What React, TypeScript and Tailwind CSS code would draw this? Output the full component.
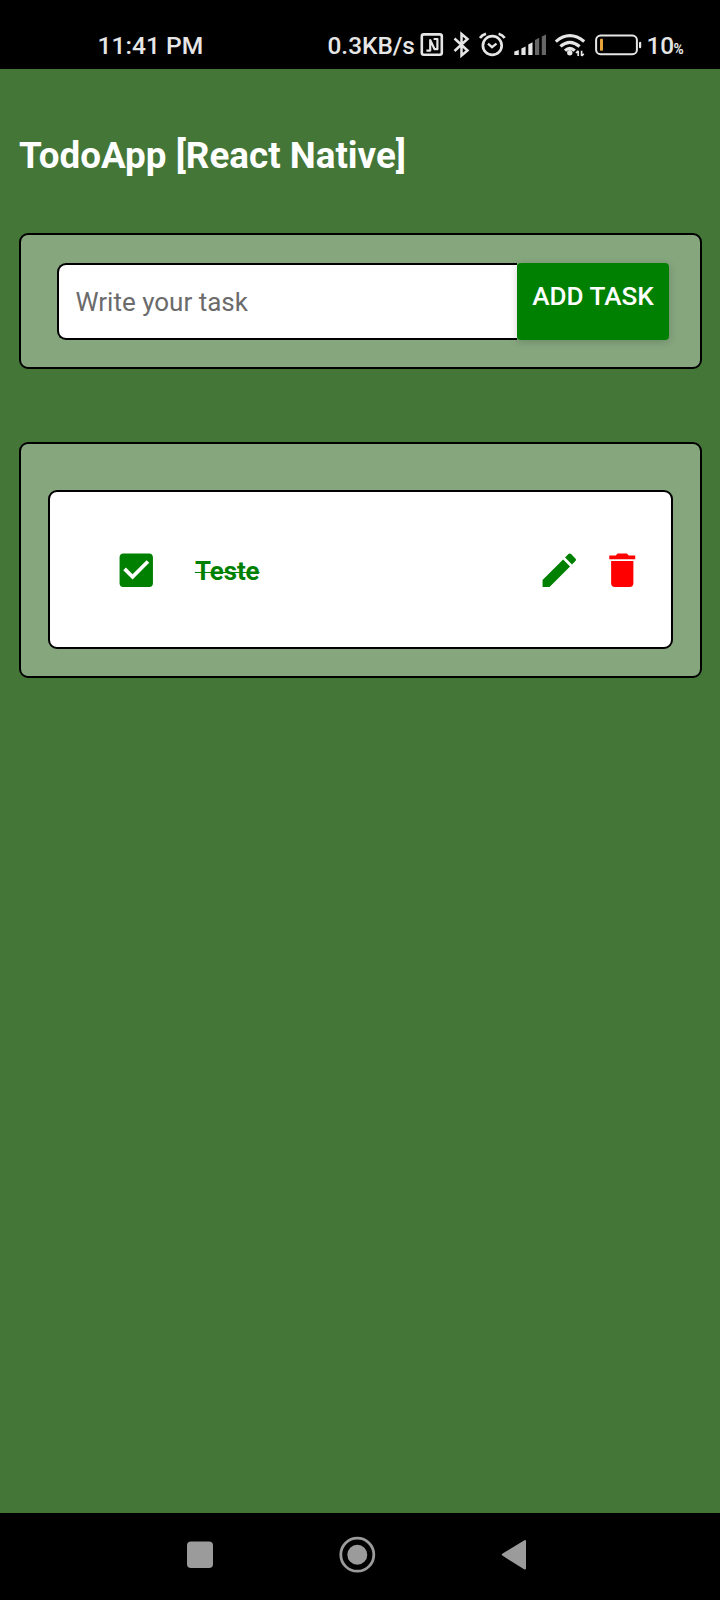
function StatusBar() {
  return (
    <header className="flex h-[69px] shrink-0 items-start bg-black text-[#e6e6e6]">
      <span className="ml-[97.5px] mt-[32px] w-[230px] whitespace-nowrap text-[24.6px] font-medium leading-[28px]">
        11:41 PM
      </span>
      <span className="mt-[32px] w-[92.5px] whitespace-nowrap text-[24.4px] font-medium leading-[28px]">
        0.3KB/s
      </span>
      <svg className="mt-[20px] h-[48px] w-[228px] shrink-0" viewBox="420 20 228 48" fill="none" stroke="#e6e6e6">
        <rect x="421.8" y="34.4" width="20" height="20.4" rx="2" strokeWidth="2.6" />
        <path d="M426.4 50.6H430.2V40L434.6 49.2H437.4V39H433.6" strokeWidth="2.2" strokeLinejoin="round" />
        <path d="M454.5 38.5L467.5 50.5L461.5 55.5V34L467.5 39L454.5 51" strokeWidth="2.5" />
        <circle cx="492.3" cy="45.5" r="9.4" strokeWidth="2.7" />
        <path d="M480 38Q482 35 486 33.8M498.6 33.8Q502.8 35 504.6 38" strokeWidth="2.7" />
        <path d="M488 43.6L492 47.2L496.5 43.6" strokeWidth="2.3" />
        <g stroke="none" fill="#e6e6e6">
          <path d="M514.3 51.4L518.8 50V55H514.3Z" />
          <path d="M521.4 48.4L525.6 46.4V55H521.4Z" />
          <path d="M528.3 44.4L532.5 42.2V55H528.3Z" />
          <path d="M535 40L539.2 37.8V55H535Z" fill="#666" />
          <path d="M541.8 36.4L546 34.4V55H541.8Z" fill="#666" />
        </g>
        <path d="M555.8 41.6Q569.8 29.8 584.2 41.6M560.4 46.4Q569.8 38.2 579.6 46.4M565 50.6Q569.8 46.2 574.8 50.6" strokeWidth="3.2" />
        <circle cx="569.8" cy="52.8" r="2.7" fill="#e6e6e6" stroke="none" />
        <path d="M578.2 56V50.8M576 53L578.2 50.8M581.6 50.8V56M583.8 53.8L581.6 56" strokeWidth="1.7" />
        <rect x="596.1" y="35.6" width="40.8" height="18.6" rx="4.5" strokeWidth="2" />
        <rect x="600" y="38.8" width="3" height="12" rx="0.8" fill="#e8a33a" stroke="none" />
        <rect x="639" y="41.8" width="2.2" height="6.4" rx="1" fill="#e6e6e6" stroke="none" />
      </svg>
      <span className="mt-[32px] -ml-[1.5px] w-[27px] text-[24.4px] font-medium leading-[28px]">10</span>
      <span className="mt-[41px] text-[13.8px] font-bold leading-[16px]">%</span>
    </header>
  );
}

function AddTask() {
  return (
    <section className="mt-[56px] flex h-[136px] w-[683px] rounded-[9px] border-2 border-black bg-[#86a67e] pl-[36px] pt-[28px]">
      <div className="flex h-[77px] w-[460px] items-center rounded-l-[9px] border-2 border-r-0 border-black bg-white pl-[16.5px] pt-[2px] text-[26px] text-[#6b6b6b]">
        <span className="whitespace-nowrap">Write your task</span>
      </div>
      <button className="flex h-[77px] w-[152px] items-start justify-center whitespace-nowrap rounded-[4px] bg-[#008000] pt-[18px] text-[26.1px] font-medium leading-[30px] text-white shadow-[0_2px_8px_rgba(0,0,0,0.18)]">
        ADD TASK
      </button>
    </section>
  );
}

function TaskList() {
  return (
    <section className="mt-[73px] h-[236px] w-[683px] rounded-[9px] border-2 border-black bg-[#86a67e] pl-[27px] pt-[46px]">
      <div className="flex h-[159px] w-[625px] items-center rounded-[9px] border-2 border-black bg-white pl-[64.4px] pt-[1px]">
        <svg className="h-[44.5px] w-[44.5px] shrink-0" viewBox="0 0 24 24" fill="#008000">
          <path d="M10,17L5,12L6.41,10.58L10,14.17L17.59,6.58L19,8M19,3H5C3.89,3 3,3.89 3,5V19A2,2 0 0,0 5,21H19A2,2 0 0,0 21,19V5C21,3.89 20.1,3 19,3Z" />
        </svg>
        <span className="ml-[36px] w-[342px] pt-[1px] text-[25.8px] font-bold leading-[30px] text-[#008000] line-through decoration-[1.3px]">
          Teste
        </span>
        <svg className="h-[44.5px] w-[44.5px] shrink-0" viewBox="0 0 24 24" fill="#008000">
          <path d="M3 17.25V21h3.75L17.81 9.94l-3.75-3.75L3 17.25zM20.71 7.04c.39-.39.39-1.02 0-1.41l-2.34-2.34c-.39-.39-1.02-.39-1.41 0l-1.83 1.83 3.75 3.75 1.83-1.83z" />
        </svg>
        <svg className="ml-[18.3px] h-[44.5px] w-[44.5px] shrink-0" viewBox="0 0 24 24" fill="#ff0000">
          <path d="M19,4H15.5L14.5,3H9.5L8.5,4H5V6H19M6,19A2,2 0 0,0 8,21H16A2,2 0 0,0 18,19V7H6V19Z" />
        </svg>
      </div>
    </section>
  );
}

function NavBar() {
  return (
    <footer className="h-[87px] shrink-0 bg-black">
      <svg className="h-[87px] w-[720px]" viewBox="0 1513 720 87">
        <rect x="187" y="1541.5" width="26" height="26.5" rx="4" fill="#9b9b9b" />
        <circle cx="357.3" cy="1554.7" r="16.5" fill="none" stroke="#9b9b9b" strokeWidth="2.8" />
        <circle cx="357.3" cy="1554.7" r="10" fill="#9b9b9b" />
        <path d="M502.8 1554.7L525 1541V1568.6Z" fill="#9b9b9b" stroke="#9b9b9b" strokeWidth="2" strokeLinejoin="round" />
      </svg>
    </footer>
  );
}

export default function App() {
  return (
    <div className="flex h-[1600px] w-[720px] flex-col overflow-hidden bg-[#447737] font-['Roboto',sans-serif]">
      <StatusBar />
      <main className="flex-1 pl-[19px] pt-[65px]">
        <h1 className="whitespace-nowrap text-[36.8px] font-bold leading-[43px] text-white">TodoApp [React Native]</h1>
        <AddTask />
        <TaskList />
      </main>
      <NavBar />
    </div>
  );
}
